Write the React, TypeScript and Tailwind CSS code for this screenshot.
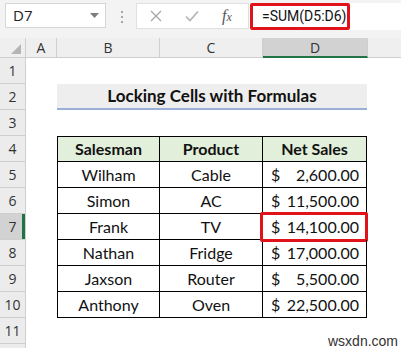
import React from "react";

const ROWS = [
  { name: "Wilham", product: "Cable", sales: "2,600.00" },
  { name: "Simon", product: "AC", sales: "11,500.00" },
  { name: "Frank", product: "TV", sales: "14,100.00" },
  { name: "Nathan", product: "Fridge", sales: "17,000.00" },
  { name: "Jaxson", product: "Router", sales: "5,500.00" },
  { name: "Anthony", product: "Oven", sales: "22,500.00" },
];

const ui = "font-['Open_Sans','Noto_Sans',sans-serif]";
const cell = "font-['Lato','Open_Sans',sans-serif] text-[16px] text-[#111]";

function RowHead({ n, active }: { n?: number; active?: boolean }) {
  return (
    <div
      className={`relative w-[26px] h-[26px] shrink-0 flex items-center justify-center border-b border-r border-[#cfcfcf] text-[14px] text-[#333] ${ui} ${
        active ? "bg-[#d2d2d2]" : "bg-[#ececec]"
      }`}
    >
      {n}
      {active && <span className="absolute right-0 top-0 h-full w-[3px] bg-[#217346]" />}
    </div>
  );
}

function Row({ n, active, children }: { n?: number; active?: boolean; children?: React.ReactNode }) {
  return (
    <div className="flex h-[26px]">
      <RowHead n={n} active={active} />
      <div className="w-[31px] shrink-0" />
      {children}
    </div>
  );
}

export default function App() {
  return (
    <div className="relative w-[401px] h-[348px] overflow-hidden bg-white">
      {/* formula bar */}
      <div className="h-[38px] bg-[#f3f3f3] flex items-start pt-[3px]">
        <div className={`ml-[5px] w-[101px] h-[25px] bg-white border border-[#d6d6d6] flex items-center justify-between pl-[7px] pr-[6px] text-[15px] text-[#222] ${ui}`}>
          <span>D7</span>
          <svg width="9" height="6" viewBox="0 0 9 6">
            <path d="M0 0h9L4.5 5z" fill="#7d7d7d" />
          </svg>
        </div>
        <div className="ml-[15px] mt-[8px] flex flex-col gap-[3px]">
          <span className="w-[2px] h-[2px] bg-[#a6a6a6]" />
          <span className="w-[2px] h-[2px] bg-[#a6a6a6]" />
          <span className="w-[2px] h-[2px] bg-[#a6a6a6]" />
        </div>
        <div className="ml-[13px] w-[113px] h-[26px] bg-white border border-[#e0e0e0] flex items-center">
          <svg className="ml-[13px]" width="12" height="12" viewBox="0 0 12 12">
            <path d="M1 1l10 10M11 1L1 11" stroke="#a9a9a9" strokeWidth="1.4" />
          </svg>
          <svg className="ml-[23px]" width="14" height="12" viewBox="0 0 14 12">
            <path d="M1 6.5l4 4L13 1.5" stroke="#b3b3b3" strokeWidth="1.6" fill="none" />
          </svg>
          <span className="ml-[23px] font-['Liberation_Serif',serif] italic text-[16px] text-[#555]">
            f<span className="text-[12px]">x</span>
          </span>
        </div>
        <div className="flex-1 h-[27px] bg-white relative">
          <div className="absolute left-[1px] top-0 w-[100px] h-[27px] border-[3px] border-[#e0131b] rounded-[2px]" />
          <div className="pl-[13px] leading-[27px] text-[14px] text-[#111] font-['Roboto','Open_Sans',sans-serif]">=SUM(D5:D6)</div>
        </div>
      </div>

      {/* column headers */}
      <div className={`flex h-[20px] bg-[#efefef] text-[14px] text-[#333] ${ui}`}>
        <div className="w-[26px] shrink-0 border-r border-b border-[#cfcfcf] flex items-end justify-end pr-[4px] pb-[3px]">
          <svg width="10" height="10" viewBox="0 0 10 10">
            <path d="M10 0v10H0z" fill="#b5b5b5" />
          </svg>
        </div>
        <div className="w-[31px] shrink-0 border-r border-b border-[#cfcfcf] flex items-center justify-center">A</div>
        <div className="w-[103px] shrink-0 border-r border-b border-[#cfcfcf] flex items-center justify-center">B</div>
        <div className="w-[103px] shrink-0 border-r border-b border-[#cfcfcf] flex items-center justify-center">C</div>
        <div className="w-[105px] shrink-0 bg-[#d2d2d2] border-r border-[#cfcfcf] border-b-[2px] border-b-[#217346] flex items-center justify-center">
          D
        </div>
        <div className="flex-1 border-b border-[#cfcfcf]" />
      </div>

      {/* sheet */}
      <Row n={1} />
      <Row n={2}>
        <div className={`w-[310px] h-[26px] bg-[#eeeeee] border-b-[2px] border-[#9bb0d8] flex items-center justify-center font-bold text-[17px] ${cell}`}>
          Locking Cells with Formulas
        </div>
      </Row>
      <Row n={3} />
      <Row n={4}>
        <div className={`w-[103px] border border-black bg-[#e2efda] flex items-center justify-center font-bold ${cell}`}>Salesman</div>
        <div className={`w-[103px] border-y border-r border-black bg-[#e2efda] flex items-center justify-center font-bold ${cell}`}>Product</div>
        <div className={`w-[104px] border-y border-r border-black bg-[#e2efda] flex items-center justify-center font-bold ${cell}`}>Net Sales</div>
      </Row>
      {ROWS.map((r, i) => (
        <Row key={r.name} n={i + 5} active={i === 2}>
          <div className={`w-[103px] border-x border-b border-black flex items-center justify-center ${cell}`}>{r.name}</div>
          <div className={`w-[103px] border-r border-b border-black flex items-center justify-center ${cell}`}>{r.product}</div>
          <div className={`relative w-[104px] border-r border-b border-black flex items-center justify-between pl-[8px] pr-[7px] ${cell}`}>
            <span>$</span>
            <span>{r.sales}</span>
            {i === 2 && (
              <span className="absolute -left-[3px] -top-[2px] w-[108px] h-[30px] border-[3px] border-[#e0131b] rounded-[2px]" />
            )}
          </div>
        </Row>
      ))}
      <Row n={11} />
      {/* row 12 is only a sliver at the bottom edge */}
      <Row />

      <div className="absolute left-[328px] top-[331px] font-['Liberation_Sans',sans-serif] text-[14px] text-[#333]">
        wsxdn.com
      </div>
    </div>
  );
}
